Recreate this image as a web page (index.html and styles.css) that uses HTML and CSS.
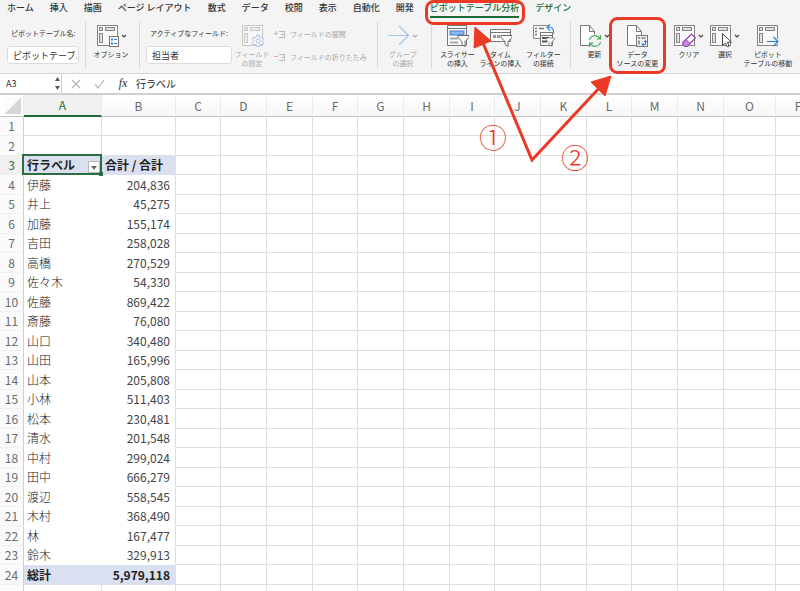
FILE: index.html
```html
<!DOCTYPE html>
<html lang="ja">
<head>
    <meta charset="UTF-8">
    <title>ピボットテーブル分析</title>
    <link rel="stylesheet" href="styles.css">
</head>
<body>
    <!-- Iconos compartidos -->
    <svg width="0" height="0" class="defs">
        <defs>
            <g id="i-pivot" fill="#e2e2e2" stroke="#858585" stroke-width="1">
                <rect x="1.5" y="1.5" width="20" height="20" fill="#fafafa"/>
                <rect x="3.5" y="3.5" width="3" height="3"/>
                <rect x="9.5" y="3.5" width="9" height="3"/>
                <rect x="3.5" y="9.5" width="3" height="9"/>
            </g>
            <path id="i-funnel" d="M0 0h11v2l-4 4v5l-3-2V6L0 2z" fill="#fff" stroke="#666"/>
            <path id="i-page" d="M1.500 1.500h9l5 6v14h-14zM10.500 1.500v6h5" fill="#fff" stroke="#777"/>
            <path id="i-chev" d="M1 2l2 2 2-2" fill="none" stroke="#444" stroke-width="1.200"/>
        </defs>
    </svg>

    <div class="app">
        <header class="ribbon">
            <nav class="tabs">
                <a href="#">ホーム</a>
                <a href="#">挿入</a>
                <a href="#">描画</a>
                <a href="#">ページ レイアウト</a>
                <a href="#">数式</a>
                <a href="#">データ</a>
                <a href="#">校閲</a>
                <a href="#">表示</a>
                <a href="#">自動化</a>
                <a href="#">開発</a>
                <a href="#" class="context active">ピボットテーブル分析</a>
                <a href="#" class="context">デザイン</a>
            </nav>

            <div class="tools">
                <div class="group field name-field">
                    <label for="pivotName">ピボットテーブル名:</label>
                    <input type="text" id="pivotName" value="ピボットテーブル1">
                </div>

                <div class="group">
                    <button type="button" class="tool wide">
                        <span class="icon">
                            <svg width="23" height="23"><use href="#i-pivot"/><rect x="13.500" y="12.500" width="9" height="10" fill="#fff" stroke="#777"/><path d="M15 15.500h2M15 19.500h2" stroke="#2f7fd6" stroke-width="2"/><path d="M18 15.500h3M18 19.500h3" stroke="#2f7fd6"/></svg>
                            <svg width="6" height="6"><use href="#i-chev"/></svg>
                        </span>
                        オプション
                    </button>
                </div>

                <div class="group active-group">
                    <div class="field">
                        <label for="activeField">アクティブなフィールド:</label>
                        <input type="text" id="activeField" value="担当者">
                    </div>
                    <button type="button" class="tool" disabled>
                        <span class="icon">
                            <svg width="23" height="23"><use href="#i-pivot"/><path d="M16.500 11l1.500 0 .6 2 1.400.8 2-.5.9 1.600-1.400 1.500v1.200l1.400 1.500-.9 1.600-2-.5-1.400.8-.6 2h-2l-.6-2-1.400-.8-2 .5-.9-1.600 1.400-1.500v-1.200l-1.400-1.500.9-1.600 2 .5 1.400-.8.6-2z" fill="#fff" stroke="#2f7fd6"/><circle cx="17" cy="17" r="2" fill="#fff" stroke="#2f7fd6"/></svg>
                        </span>
                        フィールド<br>の設定
                    </button>
                    <div class="list">
                        <button type="button" disabled>
                            <svg width="12" height="9"><path d="M0 3.500h4M2 1.500v4" stroke="#2e9b4f"/><path d="M5 1.500h6M7 4.500h4M5 7.500h6M10.500 1v7" stroke="#666"/></svg>
                            フィールドの展開
                        </button>
                        <button type="button" disabled>
                            <svg width="12" height="9"><path d="M0 3.500h4" stroke="#d33"/><path d="M5 1.500h6M7 4.500h4M5 7.500h6M10.500 1v7" stroke="#666"/></svg>
                            フィールドの折りたたみ
                        </button>
                    </div>
                </div>

                <div class="group">
                    <button type="button" class="tool wide" disabled>
                        <span class="icon">
                            <svg width="23" height="23"><path d="M1 11.500h20M12 2l9.500 9.500L12 21" fill="none" stroke="#2f7fd6" stroke-width="1.200"/></svg>
                            <svg width="6" height="6"><use href="#i-chev"/></svg>
                        </span>
                        グループ<br>の選択
                    </button>
                </div>

                <div class="group filters">
                    <button type="button" class="tool">
                        <span class="icon">
                            <svg width="23" height="23"><path d="M1.500 1.500h19v20h-19zM1.500 4.500h19" fill="#fafafa" stroke="#777"/><rect x="4" y="7" width="14" height="4" fill="#8bb9ee" stroke="#3d7cc9"/><path d="M4 14.500h8M4 18.500h8" stroke="#aaa" stroke-width="2"/><use href="#i-funnel" x="12" y="11.500"/></svg>
                        </span>
                        スライサー<br>の挿入
                    </button>
                    <button type="button" class="tool">
                        <span class="icon">
                            <svg width="23" height="23"><path d="M1.500 5.500h20v12h-20zM1.500 8.500h20" fill="#fafafa" stroke="#777"/><path d="M4 12.500h3M8 12.500h3M12 12.500h3M16 12.500h3" stroke="#999" stroke-width="3"/><use href="#i-funnel" x="12" y="11.500"/></svg>
                        </span>
                        タイム<br>ラインの挿入
                    </button>
                    <button type="button" class="tool">
                        <span class="icon">
                            <svg width="23" height="23"><path d="M18 1.500H1.500v13H9" fill="#fafafa" stroke="#888"/><path d="M3 4.500h2M7 4.500h5M3 7.500h2M3 10.500h2" stroke="#777" stroke-width="1.500"/><path d="M8.500 8.500h12v13h-12zM8.500 11.500h12" fill="#fafafa" stroke="#777"/><path d="M10 14h7M10 17.500h5" stroke="#555" stroke-width="2"/><path d="M18 .5l-3 3 3 3M15 3.500c5-1 7 1 6.500 6" fill="none" stroke="#3d8be0" stroke-width="1.200"/><g transform="translate(14 14) scale(.75)"><use href="#i-funnel"/></g></svg>
                        </span>
                        フィルター<br>の接続
                    </button>
                </div>

                <div class="group data">
                    <button type="button" class="tool">
                        <span class="icon">
                            <svg width="23" height="23"><use href="#i-page"/><circle cx="16" cy="17" r="6.500" fill="#f4f4f4"/><path d="M10.500 16c1-5 8-6 10.500-1M21.500 11v4h-4M21.500 18c-1 5-8 6-10.500 1M10.500 23v-4h4" fill="none" stroke="#46ad5c" stroke-width="1.200"/></svg>
                            <svg width="6" height="6"><use href="#i-chev"/></svg>
                        </span>
                        更新
                    </button>
                    <button type="button" class="tool">
                        <span class="icon">
                            <svg width="23" height="23"><use href="#i-page"/><rect x="10.500" y="11.500" width="11" height="11" fill="#eee" stroke="#777"/><path d="M12 14h2M15.500 14h4M13 16.500v4" stroke="#999" stroke-width="2"/><path d="M16 20.500h3.500v-4M17.500 19l-1.500 1.500 1.500 1.500M18 18l1.500-1.500L21 18" fill="none" stroke="#2f7fd6"/></svg>
                        </span>
                        データ<br>ソースの変更
                    </button>
                </div>

                <div class="group actions">
                    <button type="button" class="tool narrow">
                        <span class="icon">
                            <svg width="23" height="23"><use href="#i-pivot"/><path d="M10 18.500l8.500-8.500 4 4-8.500 8.500h-2l-2-2z" fill="#fff" stroke="#8e3fb0" stroke-width="1.200"/><path d="M10 18.500l3-3 4 4-3 3h-2l-2-2z" fill="#c58adb" stroke="#8e3fb0"/></svg>
                            <svg width="6" height="6"><use href="#i-chev"/></svg>
                        </span>
                        クリア
                    </button>
                    <button type="button" class="tool narrow">
                        <span class="icon">
                            <svg width="23" height="23"><use href="#i-pivot"/><path d="M13.500 9.500v12l3-2.500 1.800 4 1.900-.9-1.800-3.900h4z" fill="#fff" stroke="#444"/></svg>
                            <svg width="6" height="6"><use href="#i-chev"/></svg>
                        </span>
                        選択
                    </button>
                    <button type="button" class="tool wide">
                        <span class="icon">
                            <svg width="23" height="23"><use href="#i-pivot"/><path d="M11 17.500h11" stroke="#f4f4f4" stroke-width="5"/><path d="M11 17.500h11M17.500 13l4.500 4.500-4.500 4.500" fill="none" stroke="#2f7fd6" stroke-width="1.200"/></svg>
                        </span>
                        ピボット<br>テーブルの移動
                    </button>
                </div>
            </div>
        </header>

        <div class="formula-bar">
            <input type="text" class="name-box" value="A3" aria-label="名前ボックス">
            <svg class="spin" width="7" height="15"><path d="M1 5l2.500-4L6 5zM1 10l2.500 4L6 10z" fill="#555"/></svg>
            <button type="button" aria-label="キャンセル"><svg width="10" height="10"><path d="M1 1l8 8M9 1L1 9" stroke="#b5b5b5" stroke-width="1.200"/></svg></button>
            <button type="button" aria-label="入力"><svg width="11" height="10"><path d="M1 5l3 4 6-8" fill="none" stroke="#b5b5b5" stroke-width="1.200"/></svg></button>
            <button type="button" class="fx">fx</button>
            <input type="text" class="formula" value="行ラベル" aria-label="数式">
        </div>

        <main class="sheet">
            <table id="grid">
                <colgroup></colgroup>
                <thead><tr></tr></thead>
                <tbody></tbody>
            </table>
        </main>

        <!-- Anotaciones sobre la hoja -->
        <svg class="notes" width="800" height="200" fill="none" stroke="#ea3a26" stroke-width="3">
            <rect x="426.500" y="1.500" width="97" height="22" rx="7"/>
            <rect x="610.500" y="18.500" width="54" height="54" rx="7"/>
            <path d="M483 43l49 117 70-75"/>
            <path d="M475 27l16 14-17 7zM611 76l-6 20-14-14z" fill="#ea3a26" stroke-width="1"/>
        </svg>
        <span class="mark mark-1">①</span>
        <span class="mark mark-2">②</span>
    </div>

    <script>
        const letters = 'ABCDEFGHIJKLMNOP'.split('');
        const datos = [
            ['伊藤', 204836], ['井上', 45275], ['加藤', 155174], ['吉田', 258028],
            ['高橋', 270529], ['佐々木', 54330], ['佐藤', 869422], ['斎藤', 76080],
            ['山口', 340480], ['山田', 165996], ['山本', 205808], ['小林', 511403],
            ['松本', 230481], ['清水', 201548], ['中村', 299024], ['田中', 666279],
            ['渡辺', 558545], ['木村', 368490], ['林', 167477], ['鈴木', 329913]
        ];
        const total = datos.reduce((suma, d) => suma + d[1], 0);

        const cols = document.querySelector('#grid colgroup');
        const head = document.querySelector('#grid thead tr');
        const body = document.querySelector('#grid tbody');

        cols.innerHTML = '<col class="c-num">' + letters.map(l => `<col class="c-${l}">`).join('');
        head.innerHTML = '<th class="corner"></th>' +
            letters.map(l => `<th scope="col"${l === 'A' ? ' class="current"' : ''}>${l}</th>`).join('');

        function celdas(fila) {
            if (fila === 3) {
                return '<td class="pivot selected">行ラベル<button type="button" class="filter" aria-label="フィルター"></button></td>' +
                    '<td class="pivot">合計 / 合計</td>';
            }
            if (fila >= 4 && fila <= 23) {
                const [nombre, valor] = datos[fila - 4];
                return `<td class="item">${nombre}</td><td class="item num">${valor.toLocaleString('en-US')}</td>`;
            }
            if (fila === 24) {
                return `<td class="pivot">総計</td><td class="pivot num">${total.toLocaleString('en-US')}</td>`;
            }
            return '<td></td><td></td>';
        }

        for (let fila = 1; fila <= 24; fila++) {
            const row = document.createElement('tr');
            row.innerHTML = `<th scope="row"${fila === 3 ? ' class="current"' : ''}>${fila}</th>` +
                celdas(fila) + '<td></td>'.repeat(letters.length - 2);
            body.appendChild(row);
        }

        // Fila vacía al final
        const ultima = document.createElement('tr');
        ultima.innerHTML = '<th></th>' + '<td></td>'.repeat(letters.length);
        body.appendChild(ultima);
    </script>
</body>
</html>
```
FILE: styles.css
```css
* {
    box-sizing: border-box;
}

body {
    margin: 0;
    font-family: "Noto Sans CJK JP", sans-serif;
    color: #333;
    background-color: #fff;
}

button, input {
    font-family: inherit;
    color: inherit;
}

button {
    border: none;
    background: none;
    padding: 0;
}

svg {
    display: block;
    flex: none;
}

.defs {
    position: absolute;
}

.app {
    position: relative;
    display: flex;
    flex-direction: column;
    height: 100vh;
    overflow: hidden;
}

/* Cinta */
.ribbon {
    flex: none;
    background-color: #f4f4f4;
    border-bottom: 1px solid #d4d4d4;
}

.tabs {
    display: flex;
    gap: 16px;
    height: 22px;
    padding: 0 7px;
}

.tabs a {
    height: 18px;
    font-size: 9px;
    font-weight: 500;
    line-height: 16px;
    color: #333;
    text-decoration: none;
    white-space: nowrap;
}

.tabs .context {
    color: #1f6b3a;
}

.tabs .active {
    border-bottom: 2px solid #1f6b3a;
}

.tools {
    display: flex;
    height: 51px;
    padding-bottom: 5px;
    font-size: 7px;
    line-height: 9px;
}

.group {
    display: flex;
    flex: none;
    padding-right: 3px;
    border-right: 1px solid #d9d9d9;
}

.field {
    display: flex;
    flex-direction: column;
    gap: 8px;
    width: 86px;
    padding-top: 7px;
}

.field label {
    padding-left: 4px;
    white-space: nowrap;
}

.field input {
    width: 100%;
    height: 18px;
    padding: 0 1px 0 5px;
    border: 1px solid #dcdcdc;
    border-radius: 3px;
    background-color: #fff;
    font-size: 9px;
}

.name-field {
    width: 86px;
    padding-left: 7px;
    padding-right: 6px;
}

.active-group {
    padding-left: 6px;
    padding-right: 10px;
}

.tool {
    width: 43px;
    padding-top: 2px;
    display: flex;
    flex-direction: column;
    align-items: center;
    font-size: 7px;
    line-height: 9px;
    white-space: nowrap;
    text-align: center;
}

.tool.narrow {
    width: 36px;
}

.tool.wide {
    width: 50px;
}

.active-group .tool {
    width: 40px;
}

.tool:disabled, .list button:disabled {
    color: #333;
    opacity: 0.4;
}

.icon {
    display: flex;
    align-items: center;
    gap: 2px;
    margin-bottom: 3px;
}

.list {
    padding-left: 2px;
}

.list button {
    display: flex;
    align-items: center;
    gap: 4px;
    height: 23px;
    padding-top: 2px;
    font-size: 7px;
    line-height: 9px;
    white-space: nowrap;
}

.filters {
    padding: 0 5px 0 4px;
}

.data {
    padding: 0 12px 0 2px;
    border-right: none;
}

.actions {
    border-right: none;
}

/* Barra de formulas */
.formula-bar {
    flex: none;
    display: flex;
    align-items: center;
    height: 21px;
    border-bottom: 2px solid #cfcfcf;
    background-color: #fff;
}

.formula-bar input {
    height: 19px;
    border: none;
    font-size: 10px;
    background: none;
}

.formula-bar .name-box {
    width: 54px;
    padding: 0 6px;
    font-size: 9px;
}

.spin + button {
    margin-right: 2px;
    padding-left: 4px;
    border-left: 1px solid #cfcfcf;
}

.formula-bar button {
    display: flex;
    align-items: center;
    justify-content: center;
    width: 24px;
    height: 19px;
}

.formula-bar .fx {
    font: italic 12px "Liberation Serif", serif;
}

.formula-bar .formula {
    flex: 1;
    padding: 0 1px;
    color: #222;
}

/* Hoja */
.sheet {
    flex: 1;
    min-height: 0;
    overflow: hidden;
}

/* la columna P sale un poco por la derecha */
table {
    width: calc(100% + 22px);
    table-layout: fixed;
    border-spacing: 0;
    border-collapse: separate;
    font-size: 12px;
    line-height: 18px;
}

col {
    width: 46px;
}

col:nth-child(3n+1) {
    width: 45px;
}

col.c-num {
    width: 24px;
}

col.c-A {
    width: 78px;
}

col.c-B {
    width: 74px;
}

col.c-O {
    width: 52px;
}

col.c-P {
    width: auto;
}

th, td {
    height: 20px;
    padding: 0;
    border-right: 1px solid #dedede;
    border-bottom: 1px solid #dedede;
    white-space: nowrap;
    overflow: hidden;
}

tbody tr:nth-child(odd) > * {
    height: 19px;
}

th {
    font-weight: 400;
    color: #6b6b6b;
    background-color: #fafafa;
}

thead th {
    height: 22px;
    border-right-color: #ececec;
    border-bottom-color: #c4c4c4;
    background: linear-gradient(#fff, #f6f6f6);
}

tbody th {
    border-bottom-color: #f0f0f0;
    border-right-color: #cfcfcf;
}

th.current {
    color: #1f6b3a;
    background: #f0f0f0;
}

thead th.current {
    border-bottom: 2px solid #1f6b3a;
}

.corner {
    background: linear-gradient(135deg, #fafafa 50%, #d6d6d6 50%) content-box;
    padding: 3px 2px 2px 4px;
}

td {
    padding-left: 3px;
}

td.num {
    text-align: right;
    padding-right: 5px;
}

.item {
    border-bottom-color: transparent;
    font-weight: 300;
    color: #222;
}

.item.num {
    border-right-color: #dedede;
    font-weight: 400;
    color: #444;
}

.item:not(.num) {
    border-right-color: transparent;
}

.pivot {
    background-color: #dbe0f1;
    border-color: #dbe0f1;
    font-weight: 700;
    color: #222;
}

.selected {
    position: relative;
    overflow: visible;
}

.selected::before {
    content: "";
    position: absolute;
    inset: -2px -1px -1px -2px;
    border: 2px solid #2c6e41;
}

.selected::after {
    content: "";
    position: absolute;
    right: -2px;
    bottom: -2px;
    width: 4px;
    height: 4px;
    background-color: #2c6e41;
}

.filter {
    position: absolute;
    right: 1px;
    bottom: 1px;
    width: 12px;
    height: 12px;
    border: 1px solid #bbb;
    background-color: #fff;
}

.filter::after {
    content: "";
    position: absolute;
    left: 2px;
    top: 4px;
    border: 3px solid transparent;
    border-top: 4px solid #666;
    border-bottom: none;
}

/* Anotaciones */
.notes {
    position: absolute;
    top: 0;
    left: 0;
    pointer-events: none;
}

.mark {
    position: absolute;
    font-size: 28px;
    font-weight: 300;
    line-height: 28px;
    color: #ea3a26;
}

.mark-1 {
    left: 479px;
    top: 123px;
}

.mark-2 {
    left: 561px;
    top: 143px;
}
```
